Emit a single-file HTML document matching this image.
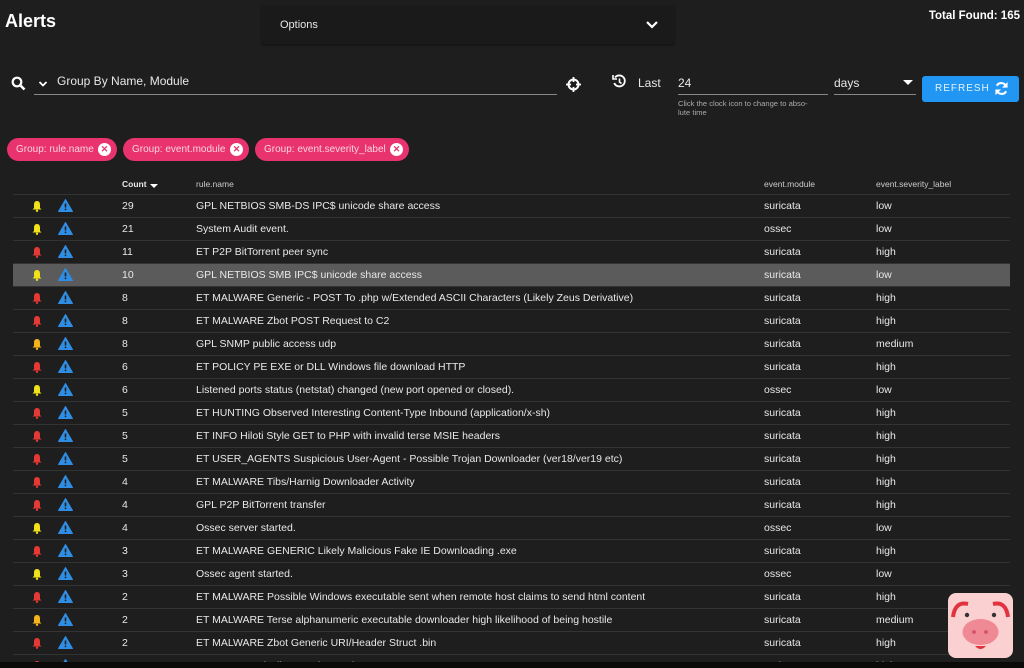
<!DOCTYPE html>
<html style="overflow:hidden;height:668px"><head><meta charset="utf-8"><style>
*{margin:0;padding:0;box-sizing:border-box}
body{width:1024px;height:668px;overflow:hidden;background:#1e1e1e;font-family:"Liberation Sans",sans-serif;color:#e8e8e8;position:relative}
.a{position:absolute}
.chip{position:absolute;top:138px;height:23px;border-radius:12px;background:#e8336f;color:#fbd3df;font-size:10px;line-height:23px;padding-left:9px;white-space:nowrap}
.chip i{position:absolute;right:6px;top:5px;width:13px;height:13px;border-radius:50%;background:#fff;color:#e8336f;font-style:normal;font-size:9px;line-height:13px;text-align:center;font-weight:bold}
.row{position:absolute;left:13px;width:997px;height:23px;border-bottom:1px solid #333;font-size:10.5px;line-height:23px}
.row span{position:absolute;top:0}
.row svg{display:block}
.hl{background:#5b5b5b}
</style></head><body>
<div class="a" style="left:5px;top:11px;font-size:18px;font-weight:bold;color:#fff">Alerts</div>
<div class="a" style="left:262px;top:6px;width:412px;height:38px;background:#1a1a1a;box-shadow:0 1px 2px #111"></div>
<div class="a" style="left:280px;top:19px;font-size:11px">Options</div>
<svg class="a" style="left:645px;top:19px" width="14" height="12" viewBox="0 0 14 12"><path d="M2 3l5 5 5-5" stroke="#fff" stroke-width="2.2" fill="none"/></svg>
<div class="a" style="right:4px;top:10px;font-size:11.5px;font-weight:bold;color:#fff">Total Found: 165</div>
<svg class="a" style="left:11px;top:76px" width="15" height="15" viewBox="0 0 15 15"><circle cx="6" cy="6" r="4.3" stroke="#fff" stroke-width="2.2" fill="none"/><path d="M9 9l4.5 4.5" stroke="#fff" stroke-width="2.6"/></svg>
<svg class="a" style="left:38px;top:80px" width="10" height="8"><path d="M1.5 2l3.5 3.5 3.5-3.5" stroke="#fff" stroke-width="1.8" fill="none"/></svg>
<div class="a" style="left:57px;top:74px;font-size:12px">Group By Name, Module</div>
<div class="a" style="left:34px;top:94px;width:523px;height:1px;background:#888"></div>
<svg class="a" style="left:566px;top:77px" width="15" height="15" viewBox="0 0 15 15"><circle cx="7.5" cy="7.5" r="5" stroke="#fff" stroke-width="2" fill="none"/><path d="M7.5 0v5M7.5 10v5M0 7.5h5M10 7.5h5" stroke="#fff" stroke-width="1.8"/></svg>
<svg class="a" style="left:612px;top:74px" width="15" height="15" viewBox="0 0 15 15"><path d="M3 3.5A5.5 5.5 0 1 1 2.2 9" stroke="#fff" stroke-width="1.8" fill="none"/><path d="M1 1v4h4" stroke="#fff" stroke-width="1.6" fill="none"/><path d="M7.5 4.5v3.5l2 1.5" stroke="#fff" stroke-width="1.6" fill="none"/></svg>
<div class="a" style="left:638px;top:76px;font-size:12px">Last</div>
<div class="a" style="left:678px;top:76px;font-size:12px">24</div>
<div class="a" style="left:678px;top:94px;width:150px;height:1px;background:#888"></div>
<div class="a" style="left:678px;top:99px;width:150px;font-size:7.6px;line-height:9px;color:#aaa">Click the clock icon to change to abso-<br>lute time</div>
<div class="a" style="left:834px;top:76px;font-size:12px">days</div>
<svg class="a" style="left:903px;top:80px" width="10" height="6"><path d="M0 0h10L5 5z" fill="#fff"/></svg>
<div class="a" style="left:834px;top:94px;width:82px;height:1px;background:#888"></div>
<div class="a" style="left:922px;top:76px;width:97px;height:26px;background:#2196f3;border-radius:3px;color:#e3f2fd;font-size:10px;letter-spacing:1px;line-height:26px;padding-left:13px">REFRESH</div>
<svg class="a" style="left:994px;top:81px" width="15" height="15" viewBox="0 0 16 16"><path d="M13 6A5.5 5.5 0 0 0 3 5M3 10a5.5 5.5 0 0 0 10 1" stroke="#fff" stroke-width="2.2" fill="none"/><path d="M14.5 1v6h-6zM1.5 15V9h6z" fill="#fff"/></svg>
<div class="chip" style="left:7px;width:110px">Group: rule.name<i>✕</i></div>
<div class="chip" style="left:123px;width:126px">Group: event.module<i>✕</i></div>
<div class="chip" style="left:255px;width:154px">Group: event.severity_label<i>✕</i></div>
<div class="a" style="left:122px;top:179px;font-size:8.5px;font-weight:bold">Count</div>
<svg class="a" style="left:150px;top:184px" width="8" height="5"><path d="M0 0h8L4 4z" fill="#fff"/></svg>
<div class="a" style="left:196px;top:179px;font-size:8.5px;color:#ccc">rule.name</div>
<div class="a" style="left:764px;top:179px;font-size:8.5px;color:#ccc">event.module</div>
<div class="a" style="left:876px;top:179px;font-size:8.5px;color:#ccc">event.severity_label</div>
<div class="a" style="left:13px;top:194px;width:997px;height:1px;background:#333"></div>
<div id="rows"></div>
<div class="a" style="left:0;top:662px;width:1024px;height:6px;background:#0a0a0a"></div>
<svg class="a" style="left:948px;top:593px" width="65" height="65" viewBox="0 0 65 65"><rect x="0" y="0" width="65" height="65" rx="8" fill="#fbd0d0"/><path d="M5 24Q7 8 20 11" stroke="#e0333f" stroke-width="4" fill="none"/><path d="M60 24Q58 8 45 11" stroke="#e0333f" stroke-width="4" fill="none"/><circle cx="19" cy="22" r="2.2" fill="#333"/><circle cx="46" cy="22" r="2.2" fill="#333"/><ellipse cx="32.5" cy="39" rx="18" ry="13" fill="#ef8a94"/><circle cx="26" cy="39" r="2" fill="#d8566a"/><circle cx="38" cy="39" r="2" fill="#d8566a"/><path d="M27 53q5.5 6 11 0z" fill="#e0333f"/></svg>
<script>
var d=[["29","GPL NETBIOS SMB-DS IPC$ unicode share access","suricata","low"],["21","System Audit event.","ossec","low"],["11","ET P2P BitTorrent peer sync","suricata","high"],["10","GPL NETBIOS SMB IPC$ unicode share access","suricata","low"],["8","ET MALWARE Generic - POST To .php w/Extended ASCII Characters (Likely Zeus Derivative)","suricata","high"],["8","ET MALWARE Zbot POST Request to C2","suricata","high"],["8","GPL SNMP public access udp","suricata","medium"],["6","ET POLICY PE EXE or DLL Windows file download HTTP","suricata","high"],["6","Listened ports status (netstat) changed (new port opened or closed).","ossec","low"],["5","ET HUNTING Observed Interesting Content-Type Inbound (application/x-sh)","suricata","high"],["5","ET INFO Hiloti Style GET to PHP with invalid terse MSIE headers","suricata","high"],["5","ET USER_AGENTS Suspicious User-Agent - Possible Trojan Downloader (ver18/ver19 etc)","suricata","high"],["4","ET MALWARE Tibs/Harnig Downloader Activity","suricata","high"],["4","GPL P2P BitTorrent transfer","suricata","high"],["4","Ossec server started.","ossec","low"],["3","ET MALWARE GENERIC Likely Malicious Fake IE Downloading .exe","suricata","high"],["3","Ossec agent started.","ossec","low"],["2","ET MALWARE Possible Windows executable sent when remote host claims to send html content","suricata","high"],["2","ET MALWARE Terse alphanumeric executable downloader high likelihood of being hostile","suricata","medium"],["2","ET MALWARE Zbot Generic URI/Header Struct .bin","suricata","high"],["2","ET P2P BTWebClient UA (Torrent) ...","suricata","high"]];
var h="";d.forEach(function(r,i){var c=r[3]=="low"?"#f2e21a":r[3]=="medium"?"#f5b51a":"#e53935";
h+='<div class="row'+(i==3?' hl':'')+'" style="top:'+(195+i*23)+'px"><span style="left:18px;top:5px"><svg width="12" height="12" viewBox="0 0 12 12"><path d="M6 1C3.5 1 3 3 3 5v3L1.5 9.5h9L9 8V5C9 3 8.5 1 6 1z" fill="'+c+'"/><circle cx="6" cy="10.8" r="1.2" fill="'+c+'"/></svg></span><span style="left:45px;top:4px"><svg width="15" height="13" viewBox="0 0 15 13"><path d="M7.5 0.5L14.5 12.5H0.5z" fill="#2f8de4" stroke="#2f8de4" stroke-linejoin="round"/><path d="M7.5 4.5v4" stroke="#1e1e1e" stroke-width="1.6"/><circle cx="7.5" cy="10.4" r="0.9" fill="#1e1e1e"/></svg></span><span style="left:109px">'+r[0]+'</span><span style="left:183px">'+r[1]+'</span><span style="left:751px">'+r[2]+'</span><span style="left:863px">'+r[3]+'</span></div>'});
document.getElementById("rows").innerHTML=h;
</script>
</body></html>
